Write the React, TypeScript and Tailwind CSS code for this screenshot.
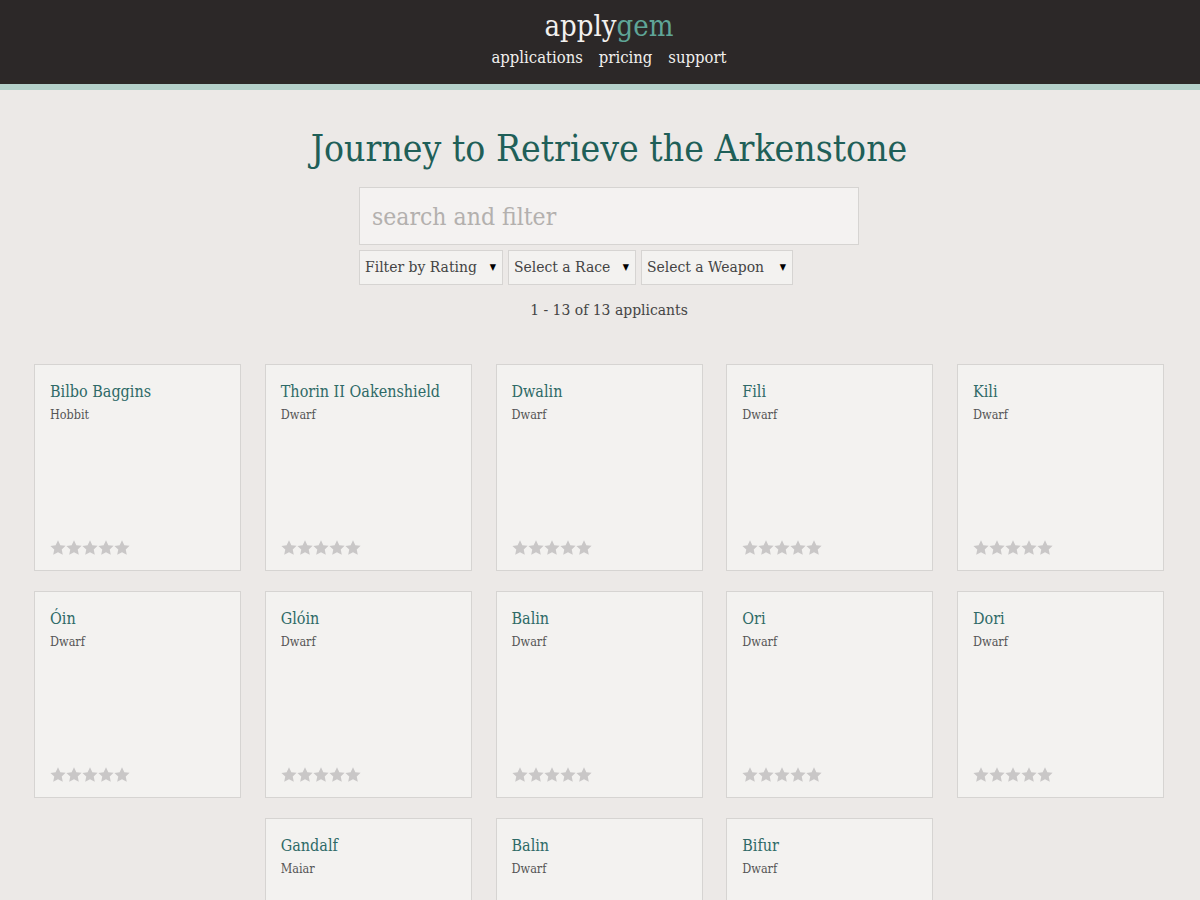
import React from "react";

const applicants = [
  { name: "Bilbo Baggins", race: "Hobbit" },
  { name: "Thorin II Oakenshield", race: "Dwarf" },
  { name: "Dwalin", race: "Dwarf" },
  { name: "Fili", race: "Dwarf" },
  { name: "Kili", race: "Dwarf" },
  { name: "Óin", race: "Dwarf" },
  { name: "Glóin", race: "Dwarf" },
  { name: "Balin", race: "Dwarf" },
  { name: "Ori", race: "Dwarf" },
  { name: "Dori", race: "Dwarf" },
  { name: "Gandalf", race: "Maiar" },
  { name: "Balin", race: "Dwarf" },
  { name: "Bifur", race: "Dwarf" },
];

const Star = () => (
  <svg viewBox="0 0 24 24" className="h-4 w-4 fill-[#c9c7c7]">
    <path d="M12 0.5l3.5 7.2 7.9 1-5.8 5.4 1.6 7.9L12 18.3 4.8 22.3l1.6-7.9L.6 8.9l7.9-1z" />
  </svg>
);

const Card = ({ name, race }: { name: string; race: string }) => (
  <div className="flex h-[207px] w-[207px] flex-col justify-between border border-[#d6d4d2] bg-[#f3f2f0] px-[15px] pt-[16px] pb-[14px]">
    <div>
      <div className="text-[16px] leading-[22px] font-light text-[#2e6a67]">{name}</div>
      <div className="mt-[3px] text-[12.5px] leading-[17px] text-[#555]">{race}</div>
    </div>
    <div className="flex">
      {[0, 1, 2, 3, 4].map((i) => (
        <Star key={i} />
      ))}
    </div>
  </div>
);

const Select = ({ label, w }: { label: string; w: string }) => (
  <div className={`flex h-[35px] shrink-0 items-center justify-between overflow-hidden border border-[#d6d4d2] bg-[#f3f2f0] pr-[6px] pl-[5px] text-[15.5px] whitespace-nowrap text-[#444] ${w}`}>
    <span>{label}</span>
    <span className="text-[9px] text-black">▼</span>
  </div>
);

export default function App() {
  return (
    <div className="min-h-screen bg-[#ece9e7] font-['DejaVu_Serif',serif]" style={{ fontStretch: "condensed" }}>
      <header className="flex h-[84px] flex-col items-center bg-[#2c2828] pt-[6px] pl-[18px]">
        <div className="text-[29px] leading-[40px] font-light">
          <span className="text-[#f2f0ee]">apply</span>
          <span className="text-[#5fa597]">gem</span>
        </div>
        <nav className="mt-[1px] flex gap-4 text-[16.5px] leading-[22px] text-[#f2f0ee]">
          <a href="#">applications</a>
          <a href="#">pricing</a>
          <a href="#">support</a>
        </nav>
      </header>
      <div className="h-[6px] bg-[#b4d0ca]" />
      <main className="flex flex-col pt-[36px]">
        <div className="flex flex-col items-center pl-[18px]">
          <h1 className="text-[37px] leading-[46px] font-light text-[#1f5f58]">
            Journey to Retrieve the Arkenstone
          </h1>
          <div className="mt-[15px] flex w-[500px] flex-col gap-[5px]">
            <input
              placeholder="search and filter"
              className="h-[58px] w-full border border-[#d6d4d2] bg-[#f4f2f1] px-[12px] text-[24.5px] outline-none placeholder:text-[#b3b0ae]"
            />
            <div className="flex gap-[5px]">
              <Select label="Filter by Rating" w="w-[144px]" />
              <Select label="Select a Race" w="w-[128px]" />
              <Select label="Select a Weapon" w="w-[152px]" />
            </div>
          </div>
          <div className="mt-[14px] text-[15.5px] leading-[22px] text-[#444]">1 - 13 of 13 applicants</div>
        </div>
        <div className="mt-[43px] ml-[34px] flex w-[1130px] flex-wrap justify-center gap-x-[23.75px] gap-y-[20px]">
          {applicants.map((a, i) => (
            <Card key={i} name={a.name} race={a.race} />
          ))}
        </div>
      </main>
    </div>
  );
}
